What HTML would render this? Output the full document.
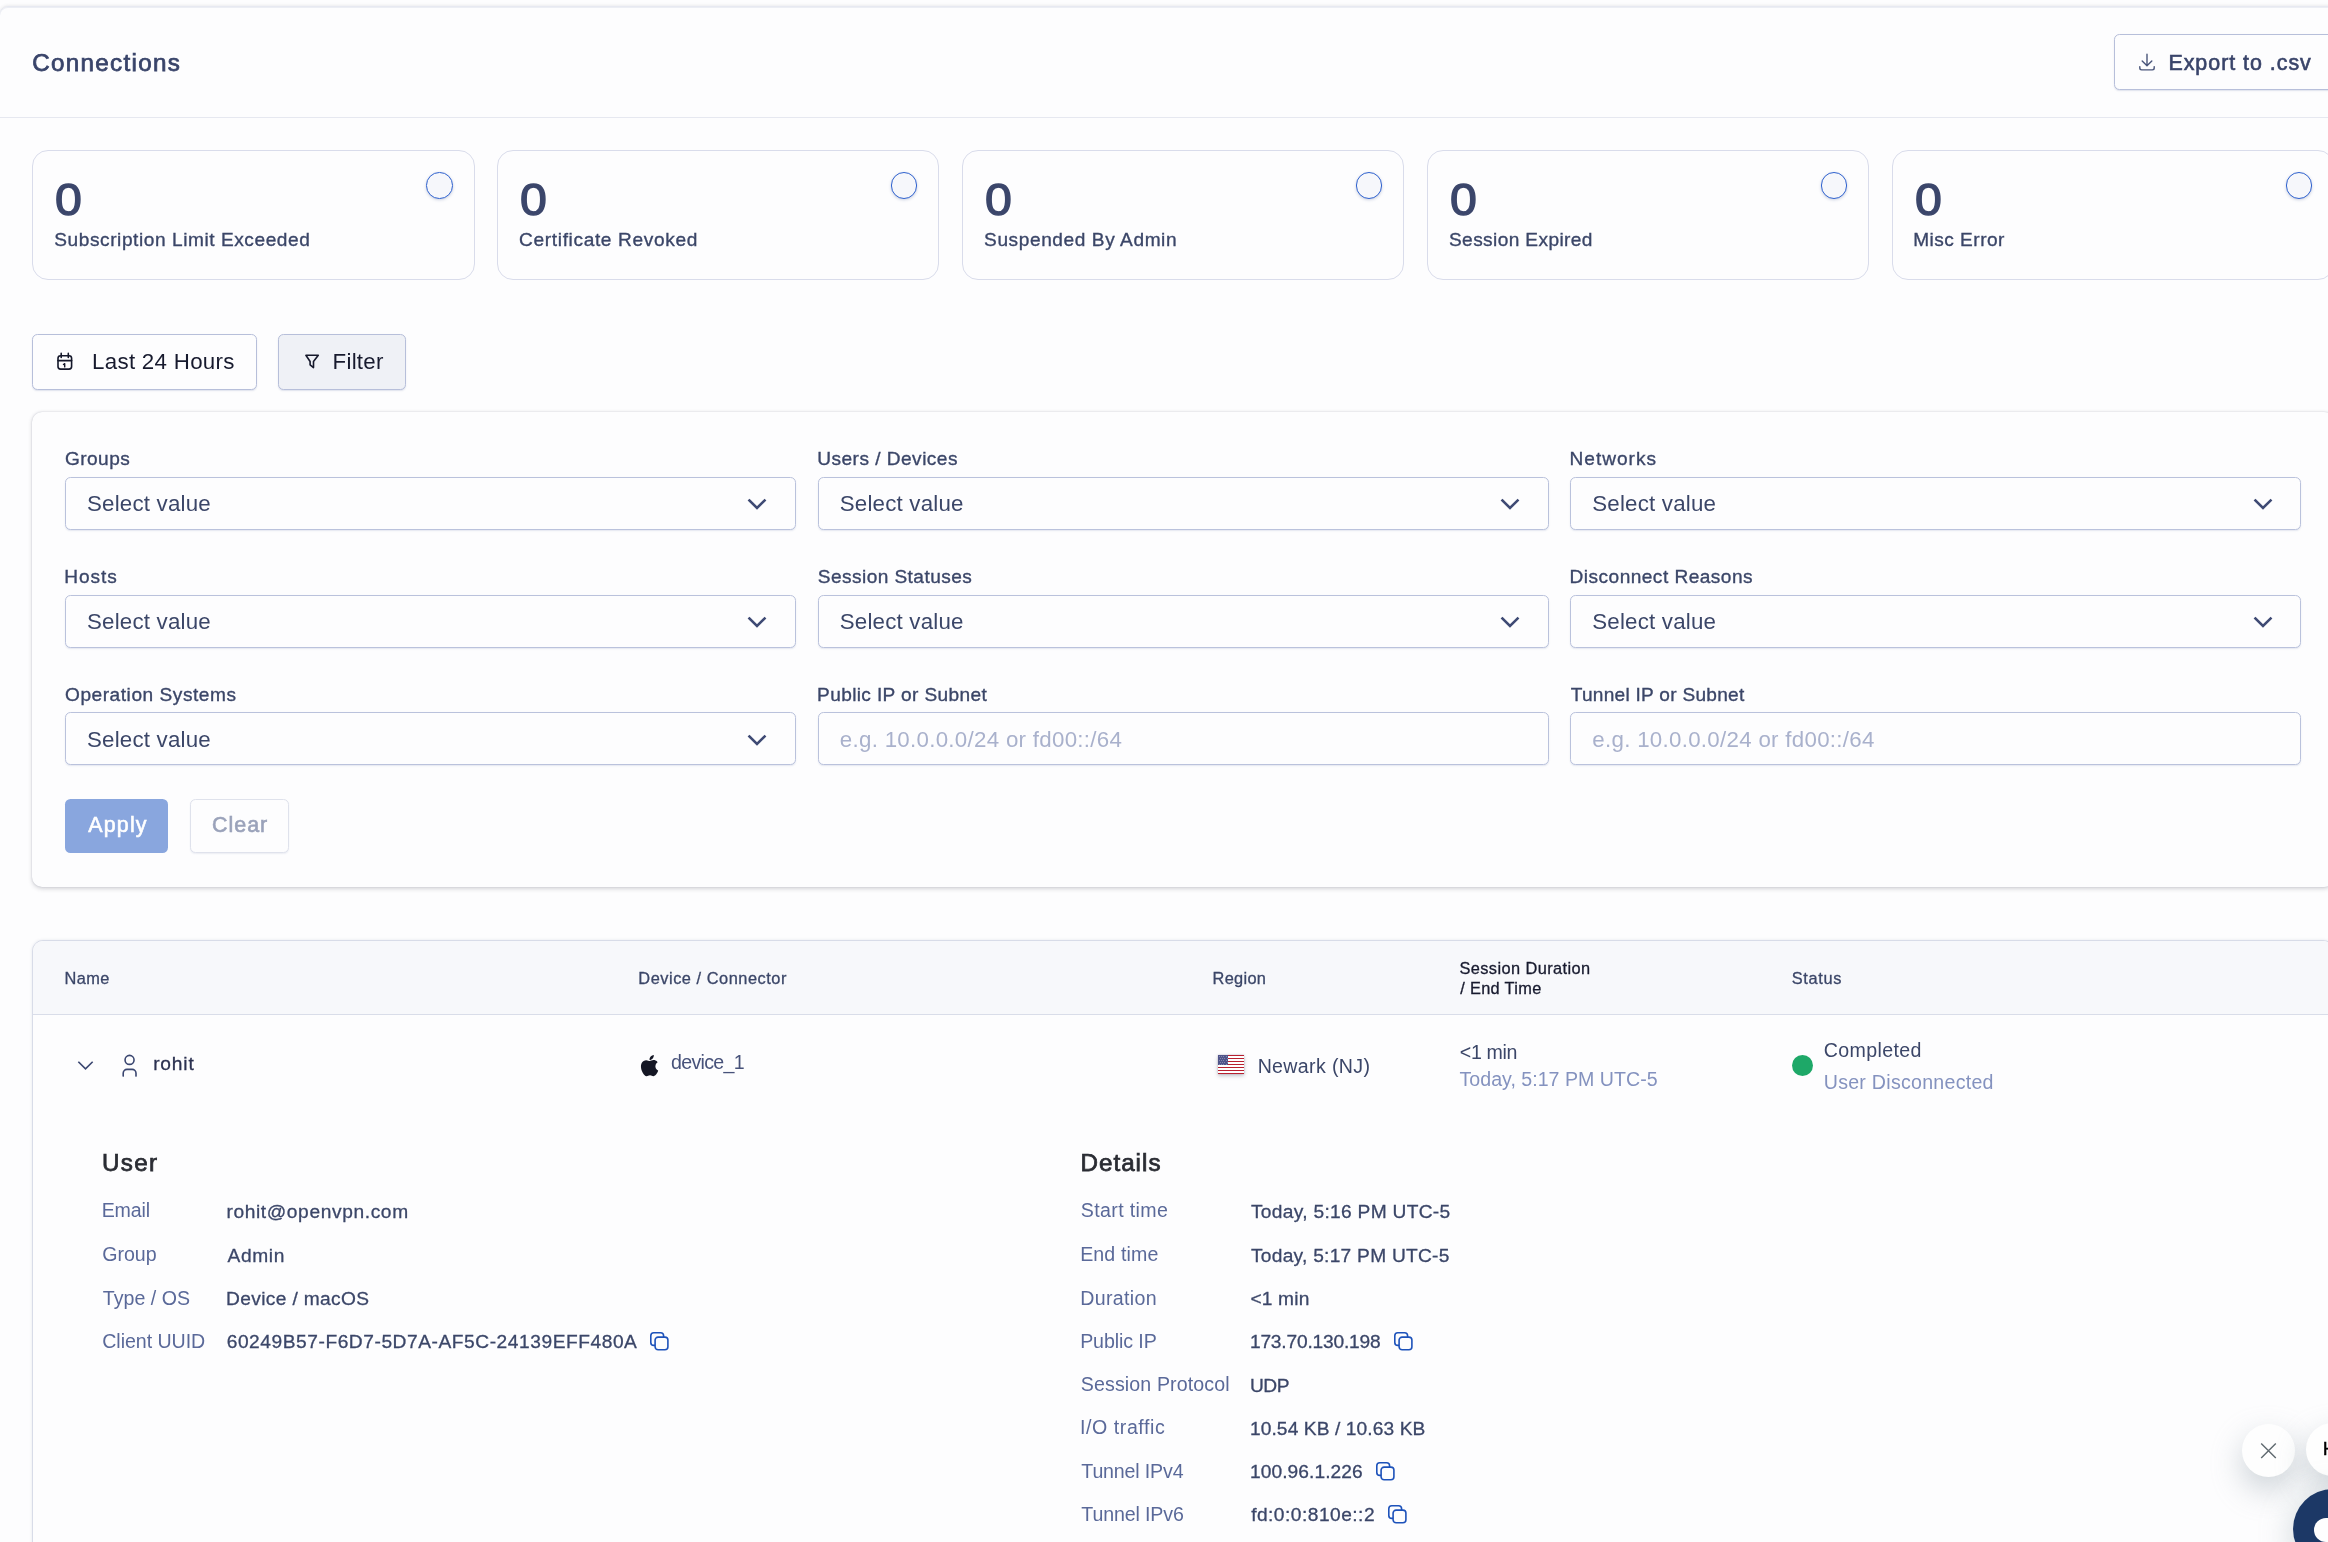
<!DOCTYPE html>
<html lang="en"><head><meta charset="utf-8"><title>Connections</title>
<style>
*{box-sizing:border-box;margin:0;padding:0}
html,body{width:2328px;height:1542px;overflow:hidden;background:#fdfdfe}
body{position:relative;font-family:"Liberation Sans",sans-serif}
.t{position:absolute;white-space:pre;font-family:"Liberation Sans",sans-serif}
.abs{position:absolute}
.frame{position:absolute;left:-1px;top:6px;width:2400px;height:1600px;border:1px solid #e7e9f1;border-radius:9px 0 0 0;background:#fdfdfe;box-shadow:0 -1px 3px rgba(90,90,100,.10),inset 0 1px 0 #eceef4}
.hline{position:absolute;left:0;top:117px;width:2328px;height:1px;background:#e6e8f0}
.card{position:absolute;top:150px;width:442.5px;height:130px;border:1px solid #d9dceb;border-radius:16px;background:#fdfdfe}
.radio{position:absolute;width:26.6px;height:26.6px;border-radius:50%;border:1.4px solid #2f62cf;background:#f6f7fb;box-shadow:0 1px 3px rgba(60,80,140,.25)}
.btn{position:absolute;border:1px solid #b7bfda;border-radius:5.5px;background:#fdfdfe;box-shadow:0 1px 1.5px rgba(90,105,160,.18)}
.panel{position:absolute;left:32.3px;top:412.2px;width:2302px;height:474.4px;border-radius:10px;background:#fdfdfe;box-shadow:0 1.5px 4px rgba(60,62,75,.20),0 0 1.5px rgba(80,85,120,.28)}
.sel{position:absolute;width:731px;height:53px;border:1px solid #bac2dc;border-radius:5.5px;background:#fdfdfe;box-shadow:0 1px 1.5px rgba(90,105,160,.15)}
.table{position:absolute;left:32px;top:940px;width:2302px;height:700px;border:1px solid #d8dce8;border-radius:11px;background:#fdfdfe;overflow:hidden;box-shadow:0 0 3px rgba(90,100,140,.15)}
.thead{position:absolute;left:0;top:0;width:100%;height:74px;background:#f7f8fb;border-bottom:1px solid #d9dde9}
svg{position:absolute;overflow:visible}
</style></head>
<body>
<div class="frame"></div>
<div class="hline"></div>

<!-- export button -->
<div class="btn" style="left:2114px;top:34px;width:260px;height:56px"></div>
<svg style="left:2138px;top:52px" width="20" height="20" viewBox="2138 52 20 20" fill="none" stroke="#49557a" stroke-width="1.4" stroke-linecap="round" stroke-linejoin="round">
<path d="M2147 54.3V65.6M2142.2 60.9L2147 65.7L2151.8 60.9M2139.8 66.6V68.1Q2139.8 69.9 2141.6 69.9H2152.4Q2154.2 69.9 2154.2 68.1V66.6"/></svg>

<!-- cards -->
<div class="card" style="left:32px"></div><div class="radio" style="left:426px;top:172.2px"></div>
<div class="card" style="left:496.9px"></div><div class="radio" style="left:890.9px;top:172.2px"></div>
<div class="card" style="left:961.8px"></div><div class="radio" style="left:1355.8px;top:172.2px"></div>
<div class="card" style="left:1426.7px"></div><div class="radio" style="left:1820.7px;top:172.2px"></div>
<div class="card" style="left:1891.6px"></div><div class="radio" style="left:2285.6px;top:172.2px"></div>

<!-- toolbar -->
<div class="btn" style="left:32px;top:334px;width:225px;height:55.5px"></div>
<svg style="left:55px;top:351px" width="20" height="22" viewBox="55 351 20 22" fill="none" stroke="#15182b" stroke-width="1.6" stroke-linecap="round" stroke-linejoin="round">
<rect x="58" y="355.7" width="13.6" height="13.4" rx="2.6"/><path d="M61.2 353.4V357.4M68.3 353.4V357.4M58 360.6H71.6"/><path d="M63.5 364.5L64.7 363.7V366.9" stroke-width="1.4"/></svg>
<div class="btn" style="left:278px;top:334px;width:128px;height:55.5px;background:#eff1f6"></div>
<svg style="left:302px;top:352px" width="20" height="20" viewBox="302 352 20 20" fill="none" stroke="#15182b" stroke-width="1.6" stroke-linecap="round" stroke-linejoin="round">
<path d="M305.9 355.3H318.3L313.5 361.5V367.6L310.1 364.8V361.5Z"/></svg>

<!-- filter panel -->
<div class="panel"></div>
<div class="sel" style="left:65.0px;top:476.6px"></div>
<svg style="left:745.4px;top:496.2px" width="24" height="16" viewBox="-12 -8 24 16" fill="none" stroke="#3e4a74" stroke-width="2.5" stroke-linecap="square" stroke-linejoin="miter"><path d="M-7.6 -3.6L0 4L7.6 -3.6"/></svg>
<div class="sel" style="left:817.7px;top:476.6px"></div>
<svg style="left:1498.1px;top:496.2px" width="24" height="16" viewBox="-12 -8 24 16" fill="none" stroke="#3e4a74" stroke-width="2.5" stroke-linecap="square" stroke-linejoin="miter"><path d="M-7.6 -3.6L0 4L7.6 -3.6"/></svg>
<div class="sel" style="left:1570.2px;top:476.6px"></div>
<svg style="left:2250.6px;top:496.2px" width="24" height="16" viewBox="-12 -8 24 16" fill="none" stroke="#3e4a74" stroke-width="2.5" stroke-linecap="square" stroke-linejoin="miter"><path d="M-7.6 -3.6L0 4L7.6 -3.6"/></svg>
<div class="sel" style="left:65.0px;top:594.5px"></div>
<svg style="left:745.4px;top:614.1px" width="24" height="16" viewBox="-12 -8 24 16" fill="none" stroke="#3e4a74" stroke-width="2.5" stroke-linecap="square" stroke-linejoin="miter"><path d="M-7.6 -3.6L0 4L7.6 -3.6"/></svg>
<div class="sel" style="left:817.7px;top:594.5px"></div>
<svg style="left:1498.1px;top:614.1px" width="24" height="16" viewBox="-12 -8 24 16" fill="none" stroke="#3e4a74" stroke-width="2.5" stroke-linecap="square" stroke-linejoin="miter"><path d="M-7.6 -3.6L0 4L7.6 -3.6"/></svg>
<div class="sel" style="left:1570.2px;top:594.5px"></div>
<svg style="left:2250.6px;top:614.1px" width="24" height="16" viewBox="-12 -8 24 16" fill="none" stroke="#3e4a74" stroke-width="2.5" stroke-linecap="square" stroke-linejoin="miter"><path d="M-7.6 -3.6L0 4L7.6 -3.6"/></svg>
<div class="sel" style="left:65.0px;top:712.4px"></div>
<svg style="left:745.4px;top:732.0px" width="24" height="16" viewBox="-12 -8 24 16" fill="none" stroke="#3e4a74" stroke-width="2.5" stroke-linecap="square" stroke-linejoin="miter"><path d="M-7.6 -3.6L0 4L7.6 -3.6"/></svg>
<div class="sel" style="left:817.7px;top:712.4px"></div>
<div class="sel" style="left:1570.2px;top:712.4px"></div>
<div class="abs" style="left:65.3px;top:799.3px;width:102.4px;height:53.4px;border-radius:5.5px;background:#89a6de"></div>
<div class="abs" style="left:189.8px;top:798.6px;width:99.6px;height:54.6px;border-radius:5.5px;border:1px solid #dfe2ec;background:#fdfdfe;box-shadow:0 1px 1.5px rgba(90,105,160,.10)"></div>

<!-- table -->
<div class="table"><div class="thead"></div></div>
<svg style="left:76px;top:1058px" width="20" height="14" viewBox="76 1058 20 14" fill="none" stroke="#3a4670" stroke-width="1.6" stroke-linecap="square"><path d="M78.9 1062.3L85.5 1068.9L92.1 1062.3"/></svg>
<svg style="left:120px;top:1052px" width="20" height="28" viewBox="120 1052 20 28" fill="none" stroke="#3a4670" stroke-width="1.6" stroke-linecap="round"><circle cx="129.55" cy="1059.9" r="4.5"/><path d="M123.2 1076.1V1073.2A3.8 3.8 0 0 1 127 1069.4H132.2A3.8 3.8 0 0 1 136 1073.2V1076.1"/></svg>
<svg style="left:638.75px;top:1054.9px" width="21.20" height="21.20" viewBox="0 0 24 24" fill="#141624"><path d="M12.152 6.896c-.948 0-2.415-1.078-3.96-1.04-2.04.027-3.91 1.183-4.961 3.014-2.117 3.675-.546 9.103 1.519 12.09 1.013 1.454 2.208 3.09 3.792 3.039 1.52-.065 2.09-.987 3.935-.987 1.831 0 2.35.987 3.96.948 1.637-.026 2.676-1.48 3.676-2.948 1.156-1.688 1.636-3.325 1.662-3.415-.039-.013-3.182-1.221-3.22-4.857-.026-3.04 2.48-4.494 2.597-4.559-1.429-2.09-3.623-2.324-4.39-2.376-2-.156-3.675 1.09-4.61 1.09zM15.53 3.83c.843-1.012 1.4-2.427 1.245-3.83-1.207.052-2.662.805-3.532 1.818-.78.896-1.454 2.338-1.273 3.714 1.338.104 2.715-.688 3.559-1.701"/></svg>
<div class="abs" style="left:1217.5px;top:1054.5px;width:26px;height:19.9px;background:#fff;box-shadow:0 2px 4px rgba(60,70,80,.28),0 0 1.5px rgba(90,60,110,.35);overflow:hidden"><div class="abs" style="left:0;top:0.00px;width:26px;height:1.53px;background:#b8202f"></div><div class="abs" style="left:0;top:3.06px;width:26px;height:1.53px;background:#b8202f"></div><div class="abs" style="left:0;top:6.12px;width:26px;height:1.53px;background:#b8202f"></div><div class="abs" style="left:0;top:9.18px;width:26px;height:1.53px;background:#b8202f"></div><div class="abs" style="left:0;top:12.25px;width:26px;height:1.53px;background:#b8202f"></div><div class="abs" style="left:0;top:15.31px;width:26px;height:1.53px;background:#b8202f"></div><div class="abs" style="left:0;top:18.37px;width:26px;height:1.53px;background:#b8202f"></div><div class="abs" style="left:0;top:0;width:10.2px;height:10.72px;background:#4f548a"></div><div class="abs" style="left:1.2px;top:1.0px;width:1px;height:1px;background:rgba(255,255,255,.3)"></div><div class="abs" style="left:3.5px;top:1.0px;width:1px;height:1px;background:rgba(255,255,255,.3)"></div><div class="abs" style="left:5.8px;top:1.0px;width:1px;height:1px;background:rgba(255,255,255,.3)"></div><div class="abs" style="left:8.1px;top:1.0px;width:1px;height:1px;background:rgba(255,255,255,.3)"></div><div class="abs" style="left:2.3px;top:3.0px;width:1px;height:1px;background:rgba(255,255,255,.3)"></div><div class="abs" style="left:4.6px;top:3.0px;width:1px;height:1px;background:rgba(255,255,255,.3)"></div><div class="abs" style="left:6.9px;top:3.0px;width:1px;height:1px;background:rgba(255,255,255,.3)"></div><div class="abs" style="left:9.2px;top:3.0px;width:1px;height:1px;background:rgba(255,255,255,.3)"></div><div class="abs" style="left:1.2px;top:5.0px;width:1px;height:1px;background:rgba(255,255,255,.3)"></div><div class="abs" style="left:3.5px;top:5.0px;width:1px;height:1px;background:rgba(255,255,255,.3)"></div><div class="abs" style="left:5.8px;top:5.0px;width:1px;height:1px;background:rgba(255,255,255,.3)"></div><div class="abs" style="left:8.1px;top:5.0px;width:1px;height:1px;background:rgba(255,255,255,.3)"></div><div class="abs" style="left:2.3px;top:7.0px;width:1px;height:1px;background:rgba(255,255,255,.3)"></div><div class="abs" style="left:4.6px;top:7.0px;width:1px;height:1px;background:rgba(255,255,255,.3)"></div><div class="abs" style="left:6.9px;top:7.0px;width:1px;height:1px;background:rgba(255,255,255,.3)"></div><div class="abs" style="left:9.2px;top:7.0px;width:1px;height:1px;background:rgba(255,255,255,.3)"></div><div class="abs" style="left:1.2px;top:9.0px;width:1px;height:1px;background:rgba(255,255,255,.3)"></div><div class="abs" style="left:3.5px;top:9.0px;width:1px;height:1px;background:rgba(255,255,255,.3)"></div><div class="abs" style="left:5.8px;top:9.0px;width:1px;height:1px;background:rgba(255,255,255,.3)"></div><div class="abs" style="left:8.1px;top:9.0px;width:1px;height:1px;background:rgba(255,255,255,.3)"></div></div>
<div class="abs" style="left:1792px;top:1054.75px;width:21px;height:21px;border-radius:50%;background:#1ea868"></div>
<svg style="left:650.20px;top:1331.60px" width="19" height="19" viewBox="0 0 19 19" fill="none" stroke="#1d52ba" stroke-width="1.6"><rect x="0.8" y="0.8" width="12.8" height="12.6" rx="3"/><rect x="5.1" y="5.1" width="12.8" height="12.6" rx="3" fill="#fdfdfe"/></svg>
<svg style="left:1394.20px;top:1331.90px" width="19" height="19" viewBox="0 0 19 19" fill="none" stroke="#1d52ba" stroke-width="1.6"><rect x="0.8" y="0.8" width="12.8" height="12.6" rx="3"/><rect x="5.1" y="5.1" width="12.8" height="12.6" rx="3" fill="#fdfdfe"/></svg>
<svg style="left:1376.20px;top:1461.70px" width="19" height="19" viewBox="0 0 19 19" fill="none" stroke="#1d52ba" stroke-width="1.6"><rect x="0.8" y="0.8" width="12.8" height="12.6" rx="3"/><rect x="5.1" y="5.1" width="12.8" height="12.6" rx="3" fill="#fdfdfe"/></svg>
<svg style="left:1388.00px;top:1505.00px" width="19" height="19" viewBox="0 0 19 19" fill="none" stroke="#1d52ba" stroke-width="1.6"><rect x="0.8" y="0.8" width="12.8" height="12.6" rx="3"/><rect x="5.1" y="5.1" width="12.8" height="12.6" rx="3" fill="#fdfdfe"/></svg>
<div style="position:absolute;left:0;top:0;width:2328px;height:1542px;will-change:transform;pointer-events:none">
<span class="t" id="t0" style="left:32.15px;top:49.00px;font-size:24.21px;line-height:27px;color:#39446a;letter-spacing:1.309px;-webkit-text-stroke:0.75px #39446a;">Connections</span>
<span class="t" id="t1" style="left:2168.44px;top:51.00px;font-size:21.43px;line-height:24px;color:#39446a;letter-spacing:0.967px;-webkit-text-stroke:0.6px #39446a;">Export to .csv</span>
<span class="t" id="t2" style="left:54.96px;top:175.00px;font-size:44.52px;line-height:49px;color:#3b466b;transform:scaleX(1.085);transform-origin:0 0;-webkit-text-stroke:1.3px #3b466b;">0</span>
<span class="t" id="t3" style="left:54.31px;top:229.00px;font-size:19.09px;line-height:21px;color:#3b4668;letter-spacing:0.568px;-webkit-text-stroke:0.35px #3b4668;">Subscription Limit Exceeded</span>
<span class="t" id="t4" style="left:519.86px;top:175.00px;font-size:44.52px;line-height:49px;color:#3b466b;transform:scaleX(1.085);transform-origin:0 0;-webkit-text-stroke:1.3px #3b466b;">0</span>
<span class="t" id="t5" style="left:519.11px;top:229.00px;font-size:19.09px;line-height:21px;color:#3b4668;letter-spacing:0.648px;-webkit-text-stroke:0.35px #3b4668;">Certificate Revoked</span>
<span class="t" id="t6" style="left:984.76px;top:175.00px;font-size:44.52px;line-height:49px;color:#3b466b;transform:scaleX(1.085);transform-origin:0 0;-webkit-text-stroke:1.3px #3b466b;">0</span>
<span class="t" id="t7" style="left:984.11px;top:229.00px;font-size:19.09px;line-height:21px;color:#3b4668;letter-spacing:0.589px;-webkit-text-stroke:0.35px #3b4668;">Suspended By Admin</span>
<span class="t" id="t8" style="left:1449.66px;top:175.00px;font-size:44.52px;line-height:49px;color:#3b466b;transform:scaleX(1.085);transform-origin:0 0;-webkit-text-stroke:1.3px #3b466b;">0</span>
<span class="t" id="t9" style="left:1449.01px;top:229.00px;font-size:19.09px;line-height:21px;color:#3b4668;letter-spacing:0.398px;-webkit-text-stroke:0.35px #3b4668;">Session Expired</span>
<span class="t" id="t10" style="left:1914.56px;top:175.00px;font-size:44.52px;line-height:49px;color:#3b466b;transform:scaleX(1.085);transform-origin:0 0;-webkit-text-stroke:1.3px #3b466b;">0</span>
<span class="t" id="t11" style="left:1913.21px;top:229.00px;font-size:19.09px;line-height:21px;color:#3b4668;letter-spacing:0.481px;-webkit-text-stroke:0.35px #3b4668;">Misc Error</span>
<span class="t" id="t12" style="left:92.07px;top:349.00px;font-size:22.3px;line-height:25px;color:#171a2e;letter-spacing:0.294px;">Last 24 Hours</span>
<span class="t" id="t13" style="left:332.57px;top:349.00px;font-size:22.3px;line-height:25px;color:#171a2e;letter-spacing:0.247px;">Filter</span>
<span class="t" id="t14" style="left:64.96px;top:448.00px;font-size:19.09px;line-height:21px;color:#3b4668;letter-spacing:0.444px;-webkit-text-stroke:0.35px #3b4668;">Groups</span>
<span class="t" id="t15" style="left:817.20px;top:448.00px;font-size:19.09px;line-height:21px;color:#3b4668;letter-spacing:0.481px;-webkit-text-stroke:0.35px #3b4668;">Users / Devices</span>
<span class="t" id="t16" style="left:1569.61px;top:448.00px;font-size:19.09px;line-height:21px;color:#3b4668;letter-spacing:0.984px;-webkit-text-stroke:0.35px #3b4668;">Networks</span>
<span class="t" id="t17" style="left:64.36px;top:566.00px;font-size:19.09px;line-height:21px;color:#3b4668;letter-spacing:0.906px;-webkit-text-stroke:0.35px #3b4668;">Hosts</span>
<span class="t" id="t18" style="left:817.81px;top:566.00px;font-size:19.09px;line-height:21px;color:#3b4668;letter-spacing:0.436px;-webkit-text-stroke:0.35px #3b4668;">Session Statuses</span>
<span class="t" id="t19" style="left:1569.61px;top:566.00px;font-size:19.09px;line-height:21px;color:#3b4668;letter-spacing:0.466px;-webkit-text-stroke:0.35px #3b4668;">Disconnect Reasons</span>
<span class="t" id="t20" style="left:65.02px;top:684.00px;font-size:19.09px;line-height:21px;color:#3b4668;letter-spacing:0.547px;-webkit-text-stroke:0.35px #3b4668;">Operation Systems</span>
<span class="t" id="t21" style="left:817.11px;top:684.00px;font-size:19.09px;line-height:21px;color:#3b4668;letter-spacing:0.368px;-webkit-text-stroke:0.35px #3b4668;">Public IP or Subnet</span>
<span class="t" id="t22" style="left:1570.75px;top:684.00px;font-size:19.09px;line-height:21px;color:#3b4668;letter-spacing:0.268px;-webkit-text-stroke:0.35px #3b4668;">Tunnel IP or Subnet</span>
<span class="t" id="t23" style="left:86.99px;top:491.00px;font-size:22.3px;line-height:25px;color:#3b4668;letter-spacing:0.208px;">Select value</span>
<span class="t" id="t24" style="left:839.74px;top:491.00px;font-size:22.3px;line-height:25px;color:#3b4668;letter-spacing:0.208px;">Select value</span>
<span class="t" id="t25" style="left:1592.24px;top:491.00px;font-size:22.3px;line-height:25px;color:#3b4668;letter-spacing:0.208px;">Select value</span>
<span class="t" id="t26" style="left:86.99px;top:609.00px;font-size:22.3px;line-height:25px;color:#3b4668;letter-spacing:0.208px;">Select value</span>
<span class="t" id="t27" style="left:839.74px;top:609.00px;font-size:22.3px;line-height:25px;color:#3b4668;letter-spacing:0.208px;">Select value</span>
<span class="t" id="t28" style="left:1592.24px;top:609.00px;font-size:22.3px;line-height:25px;color:#3b4668;letter-spacing:0.208px;">Select value</span>
<span class="t" id="t29" style="left:86.99px;top:727.00px;font-size:22.3px;line-height:25px;color:#3b4668;letter-spacing:0.208px;">Select value</span>
<span class="t" id="t30" style="left:839.80px;top:727.00px;font-size:22.3px;line-height:25px;color:#a9b1cc;letter-spacing:0.290px;">e.g. 10.0.0.0/24 or fd00::/64</span>
<span class="t" id="t31" style="left:1592.30px;top:727.00px;font-size:22.3px;line-height:25px;color:#a9b1cc;letter-spacing:0.290px;">e.g. 10.0.0.0/24 or fd00::/64</span>
<span class="t" id="t32" style="left:88.26px;top:813.00px;font-size:21.43px;line-height:24px;color:#ffffff;letter-spacing:1.172px;-webkit-text-stroke:0.6px #ffffff;">Apply</span>
<span class="t" id="t33" style="left:212.11px;top:813.00px;font-size:21.43px;line-height:24px;color:#9aa2ba;letter-spacing:0.960px;-webkit-text-stroke:0.6px #9aa2ba;">Clear</span>
<span class="t" id="t34" style="left:64.56px;top:969.00px;font-size:16.37px;line-height:18px;color:#3b4668;letter-spacing:0.377px;-webkit-text-stroke:0.3px #3b4668;">Name</span>
<span class="t" id="t35" style="left:638.31px;top:969.00px;font-size:16.37px;line-height:18px;color:#3b4668;letter-spacing:0.526px;-webkit-text-stroke:0.3px #3b4668;">Device / Connector</span>
<span class="t" id="t36" style="left:1212.56px;top:969.00px;font-size:16.37px;line-height:18px;color:#3b4668;letter-spacing:0.302px;-webkit-text-stroke:0.3px #3b4668;">Region</span>
<span class="t" id="t37" style="left:1459.41px;top:959.00px;font-size:16.37px;line-height:18px;color:#171a2e;letter-spacing:0.411px;-webkit-text-stroke:0.3px #171a2e;">Session Duration</span>
<span class="t" id="t38" style="left:1460.15px;top:979.00px;font-size:16.37px;line-height:18px;color:#171a2e;letter-spacing:0.330px;-webkit-text-stroke:0.3px #171a2e;">/ End Time</span>
<span class="t" id="t39" style="left:1791.66px;top:969.00px;font-size:16.37px;line-height:18px;color:#3b4668;letter-spacing:0.679px;-webkit-text-stroke:0.3px #3b4668;">Status</span>
<span class="t" id="t40" style="left:153.13px;top:1053.00px;font-size:19.17px;line-height:21px;color:#2b3150;letter-spacing:0.837px;-webkit-text-stroke:0.3px #2b3150;">rohit</span>
<span class="t" id="t41" style="left:670.93px;top:1051.00px;font-size:19.6px;line-height:22px;color:#47527a;letter-spacing:-0.665px;">device_1</span>
<span class="t" id="t42" style="left:1257.64px;top:1055.00px;font-size:19.6px;line-height:22px;color:#3b4668;letter-spacing:0.346px;">Newark (NJ)</span>
<span class="t" id="t43" style="left:1459.78px;top:1041.00px;font-size:19.6px;line-height:22px;color:#3b4668;letter-spacing:-0.324px;">&lt;1 min</span>
<span class="t" id="t44" style="left:1459.56px;top:1068.00px;font-size:19.6px;line-height:22px;color:#8492bf;letter-spacing:0.010px;">Today, 5:17 PM UTC-5</span>
<span class="t" id="t45" style="left:1823.75px;top:1039.00px;font-size:19.6px;line-height:22px;color:#3b4668;letter-spacing:0.374px;">Completed</span>
<span class="t" id="t46" style="left:1823.74px;top:1071.00px;font-size:19.6px;line-height:22px;color:#8492bf;letter-spacing:0.264px;">User Disconnected</span>
<span class="t" id="t47" style="left:102.11px;top:1149.00px;font-size:24.21px;line-height:27px;color:#2a2c33;letter-spacing:1.270px;-webkit-text-stroke:0.75px #2a2c33;">User</span>
<span class="t" id="t48" style="left:1080.49px;top:1149.00px;font-size:24.21px;line-height:27px;color:#2a2c33;letter-spacing:1.004px;-webkit-text-stroke:0.75px #2a2c33;">Details</span>
<span class="t" id="t49" style="left:101.64px;top:1199.00px;font-size:19.6px;line-height:22px;color:#5a6999;letter-spacing:-0.145px;">Email</span>
<span class="t" id="t50" style="left:226.38px;top:1201.00px;font-size:19.17px;line-height:21px;color:#3b4668;letter-spacing:0.625px;-webkit-text-stroke:0.3px #3b4668;">rohit@openvpn.com</span>
<span class="t" id="t51" style="left:102.26px;top:1243.00px;font-size:19.6px;line-height:22px;color:#5a6999;letter-spacing:-0.040px;">Group</span>
<span class="t" id="t52" style="left:227.61px;top:1245.00px;font-size:19.17px;line-height:21px;color:#3b4668;letter-spacing:0.605px;-webkit-text-stroke:0.3px #3b4668;">Admin</span>
<span class="t" id="t53" style="left:102.81px;top:1287.00px;font-size:19.6px;line-height:22px;color:#5a6999;letter-spacing:0.027px;">Type / OS</span>
<span class="t" id="t54" style="left:226.08px;top:1288.00px;font-size:19.17px;line-height:21px;color:#3b4668;letter-spacing:0.347px;-webkit-text-stroke:0.3px #3b4668;">Device / macOS</span>
<span class="t" id="t55" style="left:102.25px;top:1330.00px;font-size:19.6px;line-height:22px;color:#5a6999;letter-spacing:-0.050px;">Client UUID</span>
<span class="t" id="t56" style="left:226.68px;top:1331.00px;font-size:19.17px;line-height:21px;color:#3b4668;letter-spacing:0.555px;-webkit-text-stroke:0.3px #3b4668;">60249B57-F6D7-5D7A-AF5C-24139EFF480A</span>
<span class="t" id="t57" style="left:1080.86px;top:1199.00px;font-size:19.6px;line-height:22px;color:#5a6999;letter-spacing:0.352px;">Start time</span>
<span class="t" id="t58" style="left:1250.97px;top:1201.00px;font-size:19.17px;line-height:21px;color:#3b4668;letter-spacing:0.304px;-webkit-text-stroke:0.3px #3b4668;">Today, 5:16 PM UTC-5</span>
<span class="t" id="t59" style="left:1080.14px;top:1243.00px;font-size:19.6px;line-height:22px;color:#5a6999;letter-spacing:0.129px;">End time</span>
<span class="t" id="t60" style="left:1250.97px;top:1245.00px;font-size:19.17px;line-height:21px;color:#3b4668;letter-spacing:0.265px;-webkit-text-stroke:0.3px #3b4668;">Today, 5:17 PM UTC-5</span>
<span class="t" id="t61" style="left:1080.14px;top:1287.00px;font-size:19.6px;line-height:22px;color:#5a6999;letter-spacing:0.367px;">Duration</span>
<span class="t" id="t62" style="left:1250.45px;top:1288.00px;font-size:19.17px;line-height:21px;color:#3b4668;letter-spacing:0.172px;-webkit-text-stroke:0.3px #3b4668;">&lt;1 min</span>
<span class="t" id="t63" style="left:1080.14px;top:1330.00px;font-size:19.6px;line-height:22px;color:#5a6999;letter-spacing:-0.086px;">Public IP</span>
<span class="t" id="t64" style="left:1249.94px;top:1331.00px;font-size:19.17px;line-height:21px;color:#3b4668;letter-spacing:-0.187px;-webkit-text-stroke:0.3px #3b4668;">173.70.130.198</span>
<span class="t" id="t65" style="left:1080.86px;top:1373.00px;font-size:19.6px;line-height:22px;color:#5a6999;letter-spacing:0.111px;">Session Protocol</span>
<span class="t" id="t66" style="left:1249.92px;top:1375.00px;font-size:19.17px;line-height:21px;color:#3b4668;letter-spacing:-0.382px;-webkit-text-stroke:0.3px #3b4668;">UDP</span>
<span class="t" id="t67" style="left:1079.94px;top:1416.00px;font-size:19.6px;line-height:22px;color:#5a6999;letter-spacing:0.570px;">I/O traffic</span>
<span class="t" id="t68" style="left:1249.94px;top:1418.00px;font-size:19.17px;line-height:21px;color:#3b4668;letter-spacing:0.101px;-webkit-text-stroke:0.3px #3b4668;">10.54 KB / 10.63 KB</span>
<span class="t" id="t69" style="left:1081.31px;top:1460.00px;font-size:19.6px;line-height:22px;color:#5a6999;letter-spacing:-0.158px;">Tunnel IPv4</span>
<span class="t" id="t70" style="left:1249.94px;top:1461.00px;font-size:19.17px;line-height:21px;color:#3b4668;letter-spacing:0.081px;-webkit-text-stroke:0.3px #3b4668;">100.96.1.226</span>
<span class="t" id="t71" style="left:1081.31px;top:1503.00px;font-size:19.6px;line-height:22px;color:#5a6999;letter-spacing:-0.129px;">Tunnel IPv6</span>
<span class="t" id="t72" style="left:1251.13px;top:1504.00px;font-size:19.17px;line-height:21px;color:#3b4668;letter-spacing:0.482px;-webkit-text-stroke:0.3px #3b4668;">fd:0:0:810e::2</span>
</div>
<div class="abs" style="left:2241.8px;top:1423.9px;width:53.4px;height:53.4px;border-radius:50%;background:#fefefe;box-shadow:0 13px 30px 1px rgba(150,165,172,.44)"></div><svg style="left:2258px;top:1440px" width="22" height="22" viewBox="2258 1440 22 22" fill="none" stroke="#5f696f" stroke-width="1.4"><path d="M2261.2 1443.4L2275.8 1458M2275.8 1443.4L2261.2 1458"/></svg><div class="abs" style="left:2305.8px;top:1423px;width:200px;height:53.4px;border-radius:26.7px;background:#fefefe;box-shadow:0 13px 30px 1px rgba(150,165,172,.44)"></div><span class="t" style="left:2322.7px;top:1437.6px;font-size:19px;line-height:22px;color:#000;-webkit-text-stroke:.4px #000">H</span><div class="abs" style="left:2293px;top:1488.9px;width:80px;height:80px;border-radius:50%;background:#1c3866;box-shadow:0 6px 30px 4px rgba(150,165,172,.35)"></div><div class="abs" style="left:2314px;top:1517.9px;width:50px;height:24px;border-radius:12px;background:#fefefe"></div>
</body></html>
